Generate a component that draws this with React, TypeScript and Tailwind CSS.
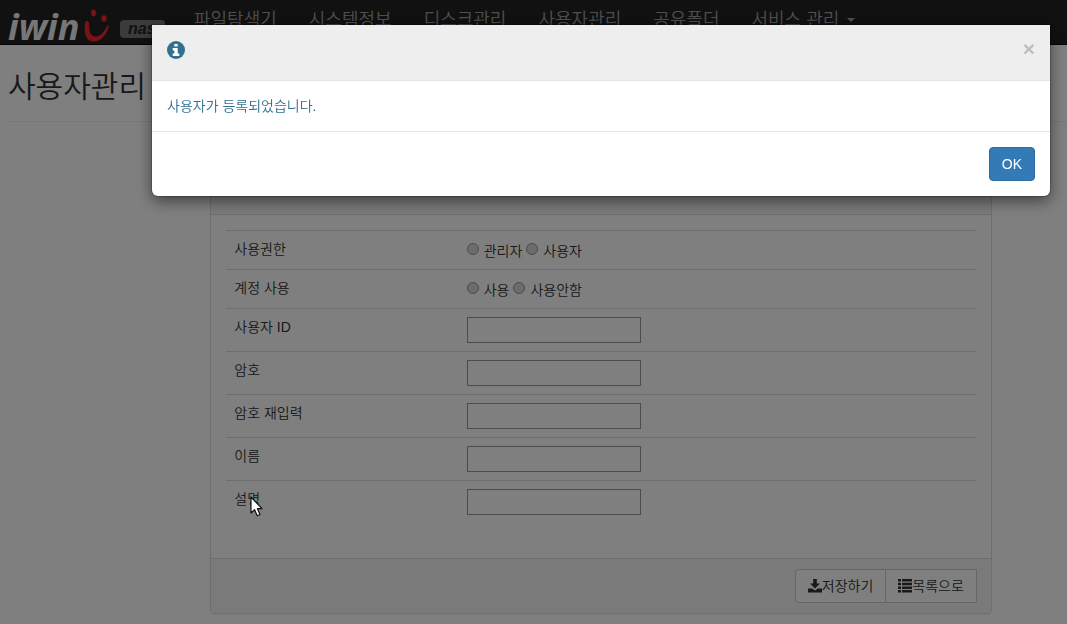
const menu = ["파일탐색기", "시스템정보", "디스크관리", "사용자관리", "공유폴더"];

const fields = [
  { id: "user-id", label: "사용자 ID", type: "text" },
  { id: "password", label: "암호", type: "password" },
  { id: "password-confirm", label: "암호 재입력", type: "password" },
  { id: "name", label: "이름", type: "text" },
  { id: "description", label: "설명", type: "text" },
];

const choices = [
  { id: "role", label: "사용권한", options: ["관리자", "사용자"] },
  { id: "account", label: "계정 사용", options: ["사용", "사용안함"] },
];

function Logo() {
  return (
    <span className="flex items-start font-['Open_Sans',sans-serif] text-[36px] leading-[38px] font-bold text-[#eee] italic">
      iwin
      <svg width="26" height="34" viewBox="0 0 26 34" fill="#f5262e" aria-hidden="true" className="ml-1">
        <path d="M2.500 13C.500 14 .500 19 1 24C1.800 31 5 33.500 10 33.500C17 33.500 22.500 27 24.800 18.500C25.200 16.800 23.800 17 23 18.500C19.500 25.500 15 29 11 28.500C7 28 5.500 24.500 5.300 20C5.200 16 5 12 2.500 13z" />
        <ellipse cx="9.500" cy="5" rx="2.400" ry="3.600" />
        <ellipse cx="20" cy="10.500" rx="2.600" ry="3.200" />
      </svg>
    </span>
  );
}

function InfoIcon() {
  return (
    <svg width="18" height="18" viewBox="0 0 18 18" aria-hidden="true">
      <circle cx="9" cy="9" r="9" fill="#31708f" />
      <path d="M7.300 3h3.400v2.600H7.300zM5.700 7h5v5.500h1.600V15H5.700v-2.500h1.600v-3H5.700z" fill="#fff" />
    </svg>
  );
}

function SaveIcon() {
  return (
    <svg width="14" height="14" viewBox="0 0 14 14" fill="currentColor" aria-hidden="true">
      <path d="M5.200 0h3.600v4.500h3.200L7 9.600 2 4.500h3.200z" />
      <path d="M0 9.600h4.200L7 11.600l2.800-2H14V13.500H0z" />
    </svg>
  );
}

function ListIcon() {
  return (
    <svg width="14" height="14" viewBox="0 0 14 14" fill="currentColor" aria-hidden="true">
      <path d="M0 0h3v2.500H0zM4 0h10v2.500H4zM0 3.700h3v2.500H0zM4 3.700h10v2.500H4zM0 7.400h3v2.500H0zM4 7.400h10v2.500H4zM0 11.100h3v2.500H0zM4 11.100h10v2.500H4z" />
    </svg>
  );
}

function NavBar() {
  return (
    <nav className="flex h-[45px] border-b border-[#080808] bg-[#222] text-lg leading-5 text-[#9d9d9d]">
      <a href="#home" className="flex w-[178px] shrink-0 items-start justify-between pt-2 pr-[13px] pl-2">
        <Logo />
        <span className="mt-3 h-[18px] w-[45px] rounded-sm bg-[#777] pl-2 text-base leading-[18px] font-bold text-[#222] italic">
          nas
        </span>
      </a>
      <ul className="flex whitespace-nowrap">
        {menu.map((item, i) => (
          <li key={i}>
            <a href="#menu" className="block px-4 py-2.5">{item}</a>
          </li>
        ))}
        <li>
          <a href="#service" className="flex items-center gap-2 px-4 py-2.5">
            서비스 관리
            <span className="border-x-4 border-t-4 border-x-transparent border-t-current" />
          </a>
        </li>
      </ul>
    </nav>
  );
}

function UserForm() {
  return (
    <form className="rounded border border-[#ddd] bg-white shadow-xs">
      <div className="h-[72px] border-b border-[#ddd] bg-[#f5f5f5]" />
      <div className="px-[15px] pt-[15px] pb-[34px]">
        <table className="w-full table-fixed">
          <tbody>
            {choices.map((c) => (
              <tr key={c.id} className="h-[39px] border-t border-[#ddd]">
                <th scope="row" className="w-[31%] px-2 pt-2 text-left align-top font-[350]">{c.label}</th>
                <td className="px-2 pt-2 align-top">
                  <div className="flex gap-1">
                    {c.options.map((o) => (
                      <label key={o} className="flex items-start gap-[5px]">
                        <input type="radio" name={c.id} className="mt-1 size-3 appearance-none rounded-full border border-[#999] bg-[#d8d8d8]" />
                        <span className="mt-0.5">{o}</span>
                      </label>
                    ))}
                  </div>
                </td>
              </tr>
            ))}
            {fields.map((f) => (
              <tr key={f.id} className="h-[43px] border-t border-[#ddd]">
                <th scope="row" className="px-2 pt-2 text-left align-top font-[350]">
                  <label htmlFor={f.id}>{f.label}</label>
                </th>
                <td className="px-2 pt-2 align-top">
                  <input id={f.id} type={f.type} className="block h-[26px] w-[174px] border border-[#999] bg-white px-1" />
                </td>
              </tr>
            ))}
          </tbody>
        </table>
      </div>
      <div className="flex justify-end border-t border-[#ddd] bg-[#f5f5f5] px-3.5 py-2.5">
        <button type="button" className="flex h-[34px] items-center rounded-l border border-[#ccc] bg-white px-3">
          <SaveIcon />
          저장하기
        </button>
        <button type="button" className="-ml-px flex h-[34px] items-center border border-[#ccc] bg-white px-3">
          <ListIcon />
          목록으로
        </button>
      </div>
    </form>
  );
}

function Dialog() {
  return (
    <div role="dialog" aria-modal="true" aria-label="알림" className="fixed inset-0 flex items-start justify-end bg-black/50 pt-[25px] pr-[17px] pl-4">
      <div className="w-full max-w-[898px] rounded-b-md bg-white shadow-[0_5px_15px_rgba(0,0,0,0.5),0_0_0_1px_rgba(0,0,0,0.2)]">
        <div className="flex h-14 items-start justify-between border-b border-[#e5e5e5] bg-[#eee] px-[15px] pt-4">
          <InfoIcon />
          <button type="button" aria-label="닫기" className="text-[21px] leading-4 font-bold text-[#bebebe]">×</button>
        </div>
        <p className="border-b border-[#e5e5e5] p-[15px] text-[#31708f]">사용자가 등록되었습니다.</p>
        <div className="flex justify-end p-[15px]">
          <button type="button" className="h-[34px] rounded border border-[#2e6da4] bg-[#337ab7] px-3 text-white">OK</button>
        </div>
      </div>
    </div>
  );
}

function Pointer() {
  return (
    <svg width="14" height="21" viewBox="0 0 14 21" className="pointer-events-none absolute top-[496px] left-[250px]" aria-hidden="true">
      <path d="M1 1v16l3.600-3.300 2.600 6 2.800-1.200-2.600-5.800H12z" fill="#fff" stroke="#111" strokeWidth="1.200" strokeLinejoin="round" />
    </svg>
  );
}

export default function App() {
  return (
    <div className="min-h-screen bg-white font-['Liberation_Sans','Noto_Sans_CJK_KR',sans-serif] text-sm leading-5 font-[350] text-[#333]">
      <NavBar />
      <main className="pl-2">
        <h1 className="border-b border-[#eee] pt-[25px] pb-[18px] text-[30px] leading-[33px]">사용자관리</h1>
        <div className="mt-5 mr-[7.1%] ml-[19.1%]">
          <UserForm />
        </div>
      </main>
      <Dialog />
      <Pointer />
    </div>
  );
}
